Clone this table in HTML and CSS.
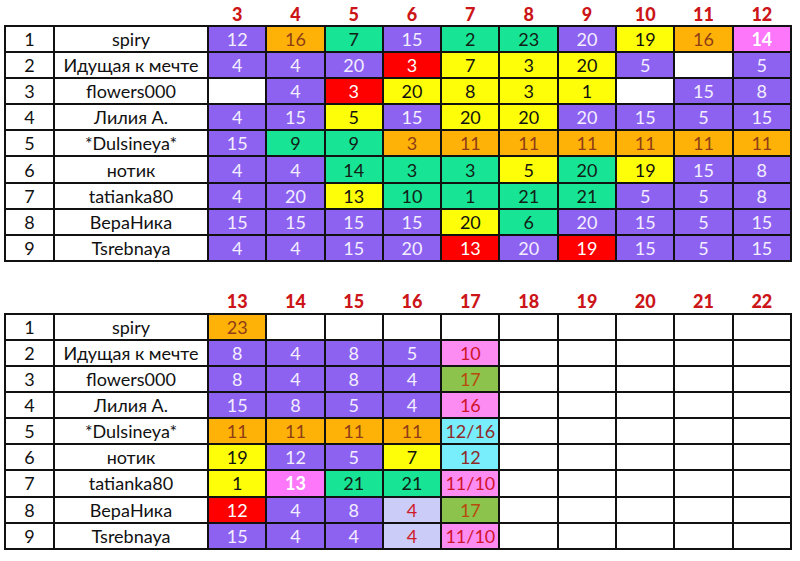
FILE: index.html
```html
<!DOCTYPE html>
<html lang="ru">
<head>
<meta charset="utf-8">
<link rel="stylesheet" href="styles.css">
</head>
<body>
<div class="page">
<table class="grid">
<colgroup><col class="c-num"><col class="c-name"><col class="c-d"><col class="c-d"><col class="c-d"><col class="c-d"><col class="c-d"><col class="c-d"><col class="c-d"><col class="c-d"><col class="c-d"><col class="c-d"></colgroup>
<thead><tr class="head"><th></th><th></th><th>3</th><th>4</th><th>5</th><th>6</th><th>7</th><th>8</th><th>9</th><th>10</th><th>11</th><th>12</th></tr></thead>
<tbody>
<tr><td>1</td><td>spiry</td><td class="p">12</td><td class="o">16</td><td class="g">7</td><td class="p">15</td><td class="g">2</td><td class="g">23</td><td class="p">20</td><td class="y">19</td><td class="o">16</td><td class="pk">14</td></tr>
<tr><td>2</td><td>Идущая к мечте</td><td class="p">4</td><td class="p">4</td><td class="p">20</td><td class="r">3</td><td class="y">7</td><td class="y">3</td><td class="y">20</td><td class="p">5</td><td></td><td class="p">5</td></tr>
<tr><td>3</td><td>flowers000</td><td></td><td class="p">4</td><td class="r">3</td><td class="y">20</td><td class="y">8</td><td class="y">3</td><td class="y">1</td><td></td><td class="p">15</td><td class="p">8</td></tr>
<tr><td>4</td><td>Лилия А.</td><td class="p">4</td><td class="p">15</td><td class="y">5</td><td class="p">15</td><td class="y">20</td><td class="y">20</td><td class="p">20</td><td class="p">15</td><td class="p">5</td><td class="p">15</td></tr>
<tr><td>5</td><td>*Dulsineya*</td><td class="p">15</td><td class="g">9</td><td class="g">9</td><td class="o">3</td><td class="o">11</td><td class="o">11</td><td class="o">11</td><td class="o">11</td><td class="o">11</td><td class="o">11</td></tr>
<tr><td>6</td><td>нотик</td><td class="p">4</td><td class="p">4</td><td class="g">14</td><td class="g">3</td><td class="g">3</td><td class="y">5</td><td class="g">20</td><td class="y">19</td><td class="p">15</td><td class="p">8</td></tr>
<tr><td>7</td><td>tatianka80</td><td class="p">4</td><td class="p">20</td><td class="y">13</td><td class="g">10</td><td class="g">1</td><td class="g">21</td><td class="g">21</td><td class="p">5</td><td class="p">5</td><td class="p">8</td></tr>
<tr><td>8</td><td>ВераНика</td><td class="p">15</td><td class="p">15</td><td class="p">15</td><td class="p">15</td><td class="y">20</td><td class="g">6</td><td class="p">20</td><td class="p">15</td><td class="p">5</td><td class="p">15</td></tr>
<tr><td>9</td><td>Tsrebnaya</td><td class="p">4</td><td class="p">4</td><td class="p">15</td><td class="p">20</td><td class="r">13</td><td class="p">20</td><td class="r">19</td><td class="p">15</td><td class="p">5</td><td class="p">15</td></tr>
</tbody>
</table>

<table class="grid">
<colgroup><col class="c-num"><col class="c-name"><col class="c-d"><col class="c-d"><col class="c-d"><col class="c-d"><col class="c-d"><col class="c-d"><col class="c-d"><col class="c-d"><col class="c-d"><col class="c-d"></colgroup>
<thead><tr class="head"><th></th><th></th><th>13</th><th>14</th><th>15</th><th>16</th><th>17</th><th>18</th><th>19</th><th>20</th><th>21</th><th>22</th></tr></thead>
<tbody>
<tr><td>1</td><td>spiry</td><td class="o">23</td><td></td><td></td><td></td><td></td><td></td><td></td><td></td><td></td><td></td></tr>
<tr><td>2</td><td>Идущая к мечте</td><td class="p">8</td><td class="p">4</td><td class="p">8</td><td class="p">5</td><td class="pk2">10</td><td></td><td></td><td></td><td></td><td></td></tr>
<tr><td>3</td><td>flowers000</td><td class="p">8</td><td class="p">4</td><td class="p">8</td><td class="p">4</td><td class="ol">17</td><td></td><td></td><td></td><td></td><td></td></tr>
<tr><td>4</td><td>Лилия А.</td><td class="p">15</td><td class="p">8</td><td class="p">5</td><td class="p">4</td><td class="pk2">16</td><td></td><td></td><td></td><td></td><td></td></tr>
<tr><td>5</td><td>*Dulsineya*</td><td class="o">11</td><td class="o">11</td><td class="o">11</td><td class="o">11</td><td class="cy">12/16</td><td></td><td></td><td></td><td></td><td></td></tr>
<tr><td>6</td><td>нотик</td><td class="y">19</td><td class="p">12</td><td class="p">5</td><td class="y">7</td><td class="cy">12</td><td></td><td></td><td></td><td></td><td></td></tr>
<tr><td>7</td><td>tatianka80</td><td class="y">1</td><td class="pk">13</td><td class="g">21</td><td class="g">21</td><td class="pk2">11/10</td><td></td><td></td><td></td><td></td><td></td></tr>
<tr><td>8</td><td>ВераНика</td><td class="r">12</td><td class="p">4</td><td class="p">8</td><td class="lv">4</td><td class="ol">17</td><td></td><td></td><td></td><td></td><td></td></tr>
<tr><td>9</td><td>Tsrebnaya</td><td class="p">15</td><td class="p">4</td><td class="p">4</td><td class="lv">4</td><td class="pk2">11/10</td><td></td><td></td><td></td><td></td><td></td></tr>
</tbody>
</table>
</div>
</body>
</html>
```

FILE: styles.css
```css
html, body {
  margin: 0;
  padding: 0;
  background: #ffffff;
}
.page {
  padding: 2px 0 0 4px;
  display: flex;
  flex-direction: column;
  gap: 28px;
  font-family: Lato, "Open Sans", sans-serif;
}
.grid {
  border-collapse: collapse;
  table-layout: fixed;
  width: 786px;
}
.c-num { width: 49px; }
.c-name { width: 154px; }
.c-d { width: 58.3px; }
.head th {
  height: 23px;
  padding: 0;
  border: none;
  color: #cc1518;
  font-weight: 900;
  font-size: 18px;
  text-align: center;
  vertical-align: middle;
}
.grid td {
  height: 26.1px;
  box-sizing: border-box;
  padding: 0;
  border: 2px solid #111;
  text-align: center;
  vertical-align: middle;
  font-size: 18px;
  color: #111;
  background: #ffffff;
  line-height: 1;
}
.grid td.p { background: #8d62f1; color: #f3eeff; }
.grid td.o { background: #feb207; color: #8e3d18; }
.grid td.g { background: #17e595; color: #122016; }
.grid td.y { background: #fefe08; color: #111; }
.grid td.r { background: #fe0000; color: #ffffff; }
.grid td.pk { background: #fd77fb; color: #ffffff; font-weight: 700; }
.grid td.pk2 { background: #fd8cf2; color: #d0142c; }
.grid td.cy { background: #78eefc; color: #8e2a2a; }
.grid td.ol { background: #8bc34c; color: #b84a0c; }
.grid td.lv { background: #cbccf8; color: #d01a2a; }
```
